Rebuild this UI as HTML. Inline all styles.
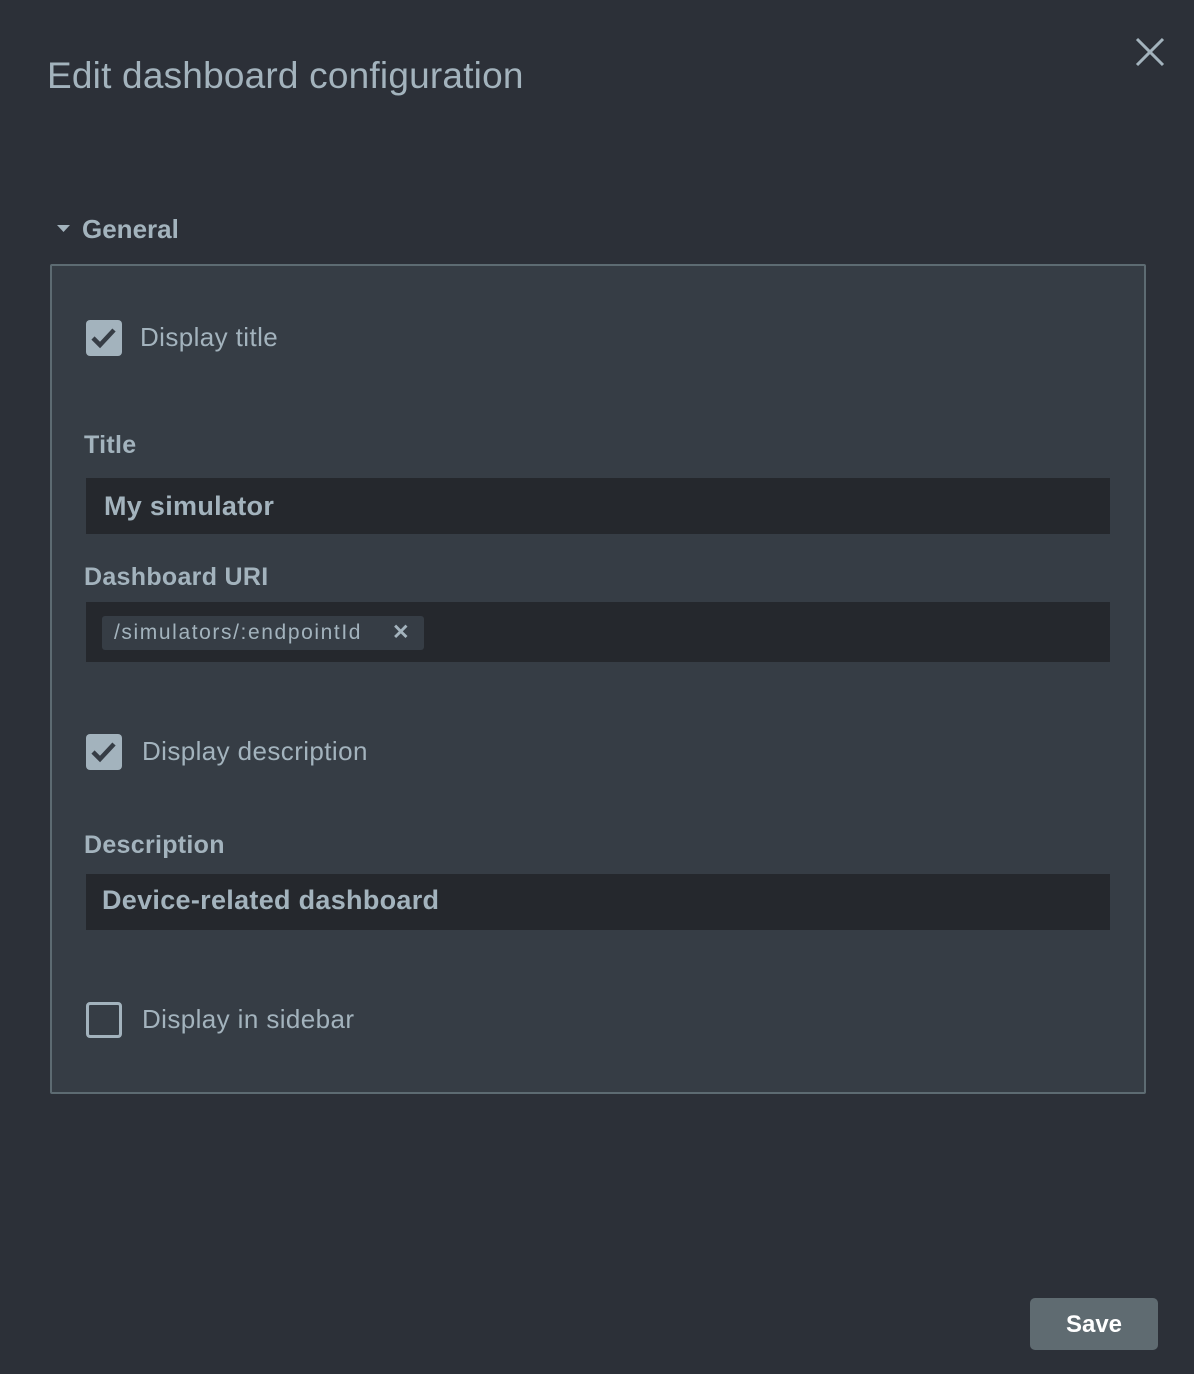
<!DOCTYPE html>
<html><head><style>
body{margin:0;width:1194px;height:1374px;background:#2c3038;font-family:"Liberation Sans",sans-serif;color:#a3b3bd;position:relative;overflow:hidden}
.a{position:absolute}
h1{position:absolute;left:47px;top:55px;margin:0;font-size:37px;font-weight:normal;color:#a3b3bd;letter-spacing:0.2px}
.panel{position:absolute;left:50px;top:264px;width:1096px;height:830px;background:#363d45;border:2px solid #5d6b72;box-sizing:border-box;border-radius:2px}
.cb{position:absolute;width:36px;height:36px;border-radius:4px;background:#a3b3bd;box-sizing:border-box}
.cb.off{background:transparent;border:3px solid #a3b3bd}
.lbl{font-size:26px;letter-spacing:0.4px}
.fl{font-size:25px;font-weight:bold;letter-spacing:0.3px}
.inp{position:absolute;left:86px;width:1024px;background:#25282d;color:#a3b3bd;font-size:27px;font-weight:bold;box-sizing:border-box;letter-spacing:0.3px}
</style></head><body>
<h1>Edit dashboard configuration</h1>
<svg class="a" style="left:1134px;top:36px" width="32" height="32" viewBox="0 0 32 32"><path d="M3 3L29 29M29 3L3 29" stroke="#a3b3bd" stroke-width="3"/></svg>
<svg class="a" style="left:56px;top:224px" width="16" height="10"><path d="M1 1h13l-6.5 7z" fill="#a3b3bd"/></svg>
<div class="a" style="left:82px;top:214px;font-size:26px;font-weight:bold">General</div>
<div class="panel"></div>
<div class="cb" style="left:86px;top:320px"><svg width="36" height="36"><path d="M7 18l7 7 14-15" stroke="#363d45" stroke-width="4.5" fill="none"/></svg></div>
<div class="a lbl" style="left:140px;top:322px">Display title</div>
<div class="a fl" style="left:84px;top:431px">Title</div>
<div class="inp" style="top:478px;height:56px;padding:13px 0 0 18px">My simulator</div>
<div class="a fl" style="left:84px;top:563px">Dashboard URI</div>
<div class="inp" style="top:602px;height:60px"></div>
<div class="a" style="left:102px;top:616px;width:322px;height:34px;background:#363d45;border-radius:3px;font-size:21px;letter-spacing:1.6px;color:#a3b3bd;line-height:34px;padding-left:12px;box-sizing:border-box">/simulators/:endpointId<span style="position:absolute;left:290px;font-weight:bold;letter-spacing:0">✕</span></div>
<div class="cb" style="left:86px;top:734px"><svg width="36" height="36"><path d="M7 18l7 7 14-15" stroke="#363d45" stroke-width="4.5" fill="none"/></svg></div>
<div class="a lbl" style="left:142px;top:736px">Display description</div>
<div class="a fl" style="left:84px;top:831px">Description</div>
<div class="inp" style="top:874px;height:56px;padding:11px 0 0 16px">Device-related dashboard</div>
<div class="cb off" style="left:86px;top:1002px"></div>
<div class="a lbl" style="left:142px;top:1004px">Display in sidebar</div>
<div class="a" style="left:1030px;top:1298px;width:128px;height:52px;background:#5f6b71;border-radius:5px;color:#fff;font-size:24px;font-weight:bold;text-align:center;line-height:54px">Save</div>
</body></html>
